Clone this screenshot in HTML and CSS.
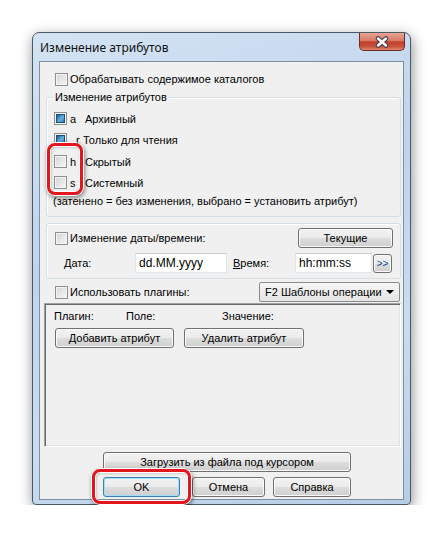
FILE: index.html
```html
<!DOCTYPE html>
<html lang="ru">
<head>
    <meta charset="UTF-8">
    <title>Изменение атрибутов</title>
    <link rel="stylesheet" href="styles.css">
</head>
<body>

    <!-- Dialog window -->
    <div class="window">
        <div class="titlebar">
            <span class="title">Изменение атрибутов</span>
            <div class="close-btn">
                <svg width="16" height="12" viewBox="0 0 16 12">
                    <path d="M4 2.5 L12 9.5 M12 2.5 L4 9.5" stroke="#3b3b4a" stroke-width="4.5" stroke-linecap="round"/>
                    <path d="M4 2.5 L12 9.5 M12 2.5 L4 9.5" stroke="#fff" stroke-width="2.4" stroke-linecap="round"/>
                </svg>
            </div>
        </div>

        <div class="client">
            <div class="check top-check"><span class="box"></span>Обрабатывать содержимое каталогов</div>

            <!-- Attributes group -->
            <div class="group attrs">
                <span class="legend">Изменение атрибутов</span>
                <div class="attr-row first-row"><span class="box filled"></span><span class="key">a</span>Архивный</div>
                <div class="attr-row row-r"><span class="box filled"></span><span class="key">r</span>Только для чтения</div>
                <div class="marked">
                    <div class="attr-row"><span class="box"></span><span class="key">h</span>Скрытый</div>
                    <div class="attr-row"><span class="box"></span><span class="key">s</span>Системный</div>
                    <div class="highlight hl-checks"></div>
                </div>
                <div class="note">(затенено = без изменения, выбрано = установить атрибут)</div>
            </div>

            <!-- Date / time group -->
            <div class="group dates">
                <div class="date-top">
                    <div class="check"><span class="box"></span>Изменение даты/времени:</div>
                    <button class="btn btn-now">Текущие</button>
                </div>
                <div class="date-row">
                    <span class="lbl lbl-date"><u>Д</u>ата:</span>
                    <div class="field field-date">dd.MM.yyyy</div>
                    <span class="lbl lbl-time"><u>В</u>ремя:</span>
                    <div class="field field-time">hh:mm:ss</div>
                    <button class="btn btn-more">&gt;&gt;</button>
                </div>
            </div>

            <div class="plugin-row">
                <div class="check"><span class="box"></span>Использовать плагины:</div>
                <div class="combo">F2 Шаблоны операции<span class="arrow"></span></div>
            </div>

            <div class="plugin-box">
                <div class="plugin-head">
                    <span class="col-plugin">Плагин:</span>
                    <span class="col-field">Поле:</span>
                    <span>Значение:</span>
                </div>
                <div class="plugin-btns">
                    <button class="btn btn-add">Добавить атрибут</button>
                    <button class="btn btn-del">Удалить атрибут</button>
                </div>
            </div>

            <button class="btn btn-load">Загрузить из файла под курсором</button>

            <div class="dlg-btns">
                <div class="ok-wrap">
                    <button class="btn btn-ok">OK</button>
                    <div class="highlight hl-ok"></div>
                </div>
                <button class="btn btn-cancel">Отмена</button>
                <button class="btn btn-help">Справка</button>
            </div>
        </div>
    </div>

</body>
</html>
```

FILE: styles.css
```css
/* Page */
body {
    margin: 0;
    background: #fff;
    font-family: 'Liberation Sans', Arial, sans-serif;
    font-size: 11px;
    color: #000;
}

/* Window frame */
.window {
    margin: 32px 0 0 32px;
    width: 367px;
    padding: 0 4px 4px 6px;
    border: 1px solid #4b5866;
    border-radius: 7px 7px 4px 4px;
    background: linear-gradient(160deg, #d3e3f3 0%, #bfd4ec 40%, #c9dcf0 70%, #b6cde6 100%);
    box-shadow: 1px 4px 14px rgba(0, 0, 0, 0.45);
}

.titlebar {
    height: 28px;
    display: flex;
    justify-content: space-between;
    align-items: flex-start;
}

.title {
    font-family: 'Noto Sans', sans-serif;
    font-size: 12px;
    margin: 6px 0 0 1px;
    color: #111;
}

.close-btn {
    width: 44px;
    height: 17px;
    margin-right: 1px;
    border: 1px solid #6b2c22;
    border-top: none;
    border-radius: 0 0 5px 5px;
    background: linear-gradient(#e9a595 0%, #d97966 45%, #c0402c 52%, #c9523d 80%, #e08a73 100%);
    display: flex;
    align-items: center;
    justify-content: center;
}

.close-btn svg {
    display: block;
}

/* Client area */
.client {
    width: 363px;
    height: 437px;
    border: 1px solid #7f8fa2;
    background: #f0f0f0;
    display: flex;
    flex-direction: column;
}

/* Checkboxes */
.check {
    display: flex;
    align-items: center;
    height: 14px;
    white-space: nowrap;
}

.box {
    position: relative;
    width: 11px;
    height: 11px;
    border: 1px solid #8e8f8f;
    background: linear-gradient(135deg, #d4d4d4, #f7f7f7);
    box-shadow: inset 0 0 0 1px #f4f4f4;
    margin-right: 2px;
    flex: none;
}

.box.filled::after {
    content: "";
    position: absolute;
    left: 1px;
    top: 1px;
    width: 7px;
    height: 7px;
    border: 1px solid #1d4f7b;
    background: linear-gradient(135deg, #1a5a8e, #66b2e2 55%, #2c72a8);
}

.top-check {
    margin: 10px 0 0 15px;
}

/* Group boxes */
.group {
    width: 353px;
    margin-left: 6px;
    border: 1px solid #d5dfe5;
    border-radius: 3px;
    box-shadow: inset 1px 1px 0 #fff;
}

.attrs {
    height: 118px;
    margin-top: 11px;
}

.legend {
    display: block;
    width: max-content;
    margin: -8px 0 0 6px;
    padding: 0 2px;
    line-height: 14px;
    background: #f0f0f0;
}

.attr-row {
    display: flex;
    align-items: center;
    height: 21px;
    padding-left: 7px;
}

.first-row {
    margin-top: 4px;
}

.key {
    width: 15px;
    margin-left: 1px;
}

.row-r .key {
    width: 7px;
    margin-left: 7px;
}

.marked {
    position: relative;
    margin-top: 1px;
}

.note {
    margin: 0 0 0 6px;
    line-height: 16px;
    white-space: nowrap;
}

/* Red callouts */
.highlight {
    position: absolute;
    border: 3px solid #e3161d;
    border-radius: 8px;
    box-shadow: 0 0 0 1px #fff, 1px 2px 4px 1px rgba(0, 0, 0, 0.45), inset 0 0 0 1px #fff, inset 1px 1px 3px rgba(0, 0, 0, 0.3);
}

.hl-checks {
    left: 0;
    top: -8px;
    width: 30px;
    height: 46px;
}

.hl-ok {
    left: -11px;
    top: -8px;
    width: 93px;
    height: 29px;
}

/* Date group */
.dates {
    height: 54px;
    margin-top: 6px;
}

.date-top {
    display: flex;
    justify-content: space-between;
    align-items: center;
    margin-top: 4px;
    padding: 0 7px 0 8px;
    height: 20px;
}

.date-row {
    display: flex;
    align-items: center;
    height: 20px;
    margin-top: 5px;
}

.lbl-date {
    margin-left: 17px;
    width: 71px;
}

.lbl-time {
    margin-left: 6px;
    width: 62px;
}

.field {
    height: 18px;
    line-height: 18px;
    padding-left: 3px;
    font-size: 12px;
    background: #fff;
    border: 1px solid #e2e6ea;
    border-top-color: #c9ccd0;
    box-sizing: content-box;
}

.field-date {
    width: 87px;
}

.field-time {
    width: 72px;
}

/* Buttons */
.btn {
    font-family: 'Liberation Sans', Arial, sans-serif;
    font-size: 11px;
    color: #000;
    padding: 0;
    border: 1px solid #707070;
    border-radius: 3px;
    background: linear-gradient(#f2f2f2 0%, #ebebeb 48%, #dddddd 52%, #cfcfcf 100%);
    box-shadow: inset 0 0 0 1px #fbfbfb;
    height: 20px;
    flex: none;
}

.btn-now {
    width: 95px;
}

.btn-more {
    width: 19px;
    height: 19px;
    margin-left: 1px;
    font-size: 10px;
    color: #1b3f8f;
}

/* Plugins */
.plugin-row {
    display: flex;
    justify-content: space-between;
    align-items: center;
    height: 20px;
    margin: 3px 3px 0 15px;
}

.combo {
    position: relative;
    width: 134px;
    height: 18px;
    line-height: 18px;
    padding-left: 5px;
    border: 1px solid #8a8a8a;
    border-radius: 2px;
    background: linear-gradient(#f6f6f6, #e4e4e4);
}

.arrow {
    position: absolute;
    right: 5px;
    top: 7px;
    border-left: 4px solid transparent;
    border-right: 4px solid transparent;
    border-top: 4px solid #000;
}

.plugin-box {
    width: 355px;
    height: 142px;
    margin: 1px 0 0 4px;
    border: 1px solid #a0a0a0;
    border-right-color: #fff;
    border-bottom-color: #fff;
    box-shadow: inset 1px 1px 0 #696969, inset -1px -1px 0 #e3e3e3;
}

.plugin-head {
    display: flex;
    margin: 5px 0 0 9px;
    line-height: 14px;
}

.col-plugin {
    width: 72px;
}

.col-field {
    width: 96px;
}

.plugin-btns {
    display: flex;
    gap: 10px;
    margin: 5px 0 0 10px;
}

.btn-add {
    width: 119px;
}

.btn-del {
    width: 120px;
}

.btn-load {
    width: 248px;
    margin: 5px 0 0 63px;
}

/* Dialog buttons */
.dlg-btns {
    display: flex;
    margin: 5px 0 0 63px;
}

.ok-wrap {
    position: relative;
}

.btn-ok {
    width: 77px;
    border-color: #3c7fb1;
    box-shadow: inset 0 0 0 1px #9fe0f6;
}

.btn-cancel {
    width: 73px;
    margin-left: 12px;
}

.btn-help {
    width: 78px;
    margin-left: 8px;
}
```
